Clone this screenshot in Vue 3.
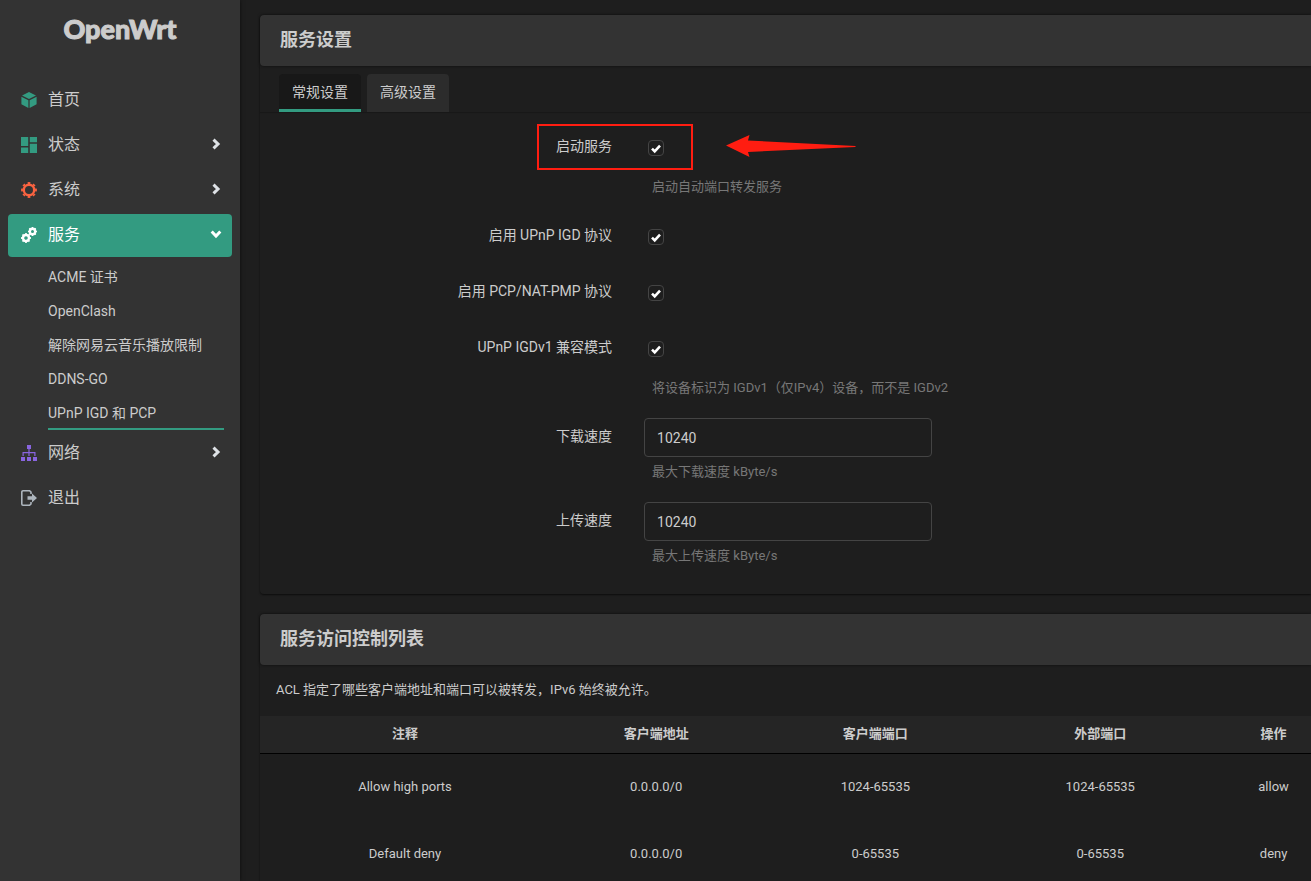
<script setup>
import { reactive } from 'vue'

const menu = [
  { id: 'home', label: '首页' },
  { id: 'status', label: '状态', sub: true },
  { id: 'system', label: '系统', sub: true },
  {
    id: 'services',
    label: '服务',
    sub: true,
    open: true,
    children: ['ACME 证书', 'OpenClash', '解除网易云音乐播放限制', 'DDNS-GO', 'UPnP IGD 和 PCP'],
  },
  { id: 'network', label: '网络', sub: true },
  { id: 'logout', label: '退出' },
]
const current = 'UPnP IGD 和 PCP'

const fields = reactive([
  { id: 'enabled', label: '启动服务', type: 'check', value: true, hint: '启动自动端口转发服务', marked: true },
  { id: 'upnp', label: '启用 UPnP IGD 协议', type: 'check', value: true },
  { id: 'natpmp', label: '启用 PCP/NAT-PMP 协议', type: 'check', value: true },
  { id: 'igdv1', label: 'UPnP IGDv1 兼容模式', type: 'check', value: true, hint: '将设备标识为 IGDv1（仅IPv4）设备，而不是 IGDv2' },
  { id: 'download', label: '下载速度', type: 'text', value: '10240', hint: '最大下载速度 kByte/s' },
  { id: 'upload', label: '上传速度', type: 'text', value: '10240', hint: '最大上传速度 kByte/s' },
])

const columns = ['注释', '客户端地址', '客户端端口', '外部端口', '操作']
const rules = [
  ['Allow high ports', '0.0.0.0/0', '1024-65535', '1024-65535', 'allow'],
  ['Default deny', '0.0.0.0/0', '0-65535', '0-65535', 'deny'],
]
</script>

<template>
  <div class="layout">
    <aside class="sidebar">
      <a class="brand" href="#">OpenWrt</a>
      <nav>
        <ul class="menu">
          <li v-for="item in menu" :key="item.id">
            <a class="item" :class="{ active: item.open }" href="#">
              <svg v-if="item.id === 'home'" class="icon green" viewBox="0 0 16 16">
                <path d="M8 0l7 3.400L8 7 1 3.400zM.4 4.700L7.400 8.200V16L.4 12.300zM15.600 4.700L8.600 8.200V16l7-3.700z" />
              </svg>
              <svg v-else-if="item.id === 'status'" class="icon green" viewBox="0 0 16 16">
                <path d="M0 0h7.200v9H0zM0 10.500h7.200V16H0zM8.800 0H16v5.200H8.800zM8.800 6.800H16V16H8.800z" />
              </svg>
              <svg v-else-if="item.id === 'system'" class="icon orange" viewBox="0 0 16 16">
                <circle class="ring" cx="8" cy="8" r="5.200" />
                <circle class="teeth" cx="8" cy="8" r="7" pathLength="80" />
              </svg>
              <svg v-else-if="item.id === 'services'" class="icon white" viewBox="0 0 16 16">
                <circle class="ring" cx="5" cy="11" r="3" />
                <circle class="teeth pair" cx="5" cy="11" r="4.300" pathLength="80" />
                <circle class="ring" cx="11.500" cy="4.500" r="2.700" />
                <circle class="teeth pair" cx="11.500" cy="4.500" r="3.800" pathLength="80" />
              </svg>
              <svg v-else-if="item.id === 'network'" class="icon purple" viewBox="0 0 16 16">
                <path d="M6 0h4v4H6zM0 12h4v4H0zM6 12h4v4H6zM12 12h4v4h-4zM7.400 4h1.200v3h5.900v4h-1.200V8.200H8.600V11H7.400V8.200H2.700V11H1.500V7h5.900z" />
              </svg>
              <svg v-else class="icon grey" viewBox="0 0 16 16">
                <path class="line" d="M10 4V2.200L8.600.8H2A1.200 1.200 0 0 0 .8 2v12A1.200 1.200 0 0 0 2 15.200h6.600L10 13.800V12" />
                <path d="M6.500 6.300H11V3.500L16 8l-5 4.500V9.700H6.500z" />
              </svg>
              <span class="text">{{ item.label }}</span>
              <svg v-if="item.sub" class="chevron" :class="{ down: item.open }" viewBox="0 0 12 12">
                <path d="M3.500 1.700L8 6l-4.500 4.300" />
              </svg>
            </a>
            <ul v-if="item.children" class="submenu">
              <li v-for="child in item.children" :key="child">
                <a class="subitem" :class="{ current: child === current }" href="#">{{ child }}</a>
              </li>
            </ul>
          </li>
        </ul>
      </nav>
    </aside>

    <main class="main">
      <section class="section">
        <h3 class="title">服务设置</h3>
        <div class="tabs">
          <button class="tab selected" type="button">常规设置</button>
          <button class="tab" type="button">高级设置</button>
        </div>
        <form class="form">
          <div v-for="field in fields" :key="field.id" class="row">
            <label class="label" :for="field.id">{{ field.label }}</label>
            <div class="field">
              <div v-if="field.type === 'check'" class="check">
                <input :id="field.id" v-model="field.value" type="checkbox" />
                <svg v-if="field.value" class="tick" viewBox="0 0 16 16">
                  <path d="M4 8.600l2.700 2.700L12 5.600" />
                </svg>
              </div>
              <input v-else :id="field.id" v-model="field.value" class="input" type="text" />
              <p v-if="field.hint" class="hint" :class="{ spaced: field.type === 'check' }">{{ field.hint }}</p>
              <template v-if="field.marked">
                <span class="mark"></span>
                <svg class="arrow" viewBox="0 0 130 22">
                  <path d="M0 10.500L23.500 0 22 5.500 129.500 11v1L22 17l1.500 5z" />
                </svg>
              </template>
            </div>
          </div>
        </form>
      </section>

      <section class="section">
        <h3 class="title">服务访问控制列表</h3>
        <p class="description">ACL 指定了哪些客户端地址和端口可以被转发，IPv6 始终被允许。</p>
        <table class="table">
          <thead>
            <tr>
              <th v-for="column in columns" :key="column">{{ column }}</th>
            </tr>
          </thead>
          <tbody>
            <tr v-for="rule in rules" :key="rule[0]">
              <td v-for="(cell, i) in rule" :key="i">{{ cell }}</td>
            </tr>
          </tbody>
        </table>
      </section>
    </main>
  </div>
</template>

<style>
body {
  background: #1e1e1e;
}
</style>

<style scoped>
.layout {
  display: flex;
  height: 100vh;
  overflow: hidden;
  color: #ccc;
  font: 14px/20px Roboto, "Noto Sans CJK SC", sans-serif;
}
.sidebar {
  box-sizing: border-box;
  flex: none;
  width: 240px;
  padding: 0 8px;
  background: #333;
  box-shadow: 0 0 4px rgba(0, 0, 0, 0.6);
}
.brand {
  display: block;
  padding: 9px 0 30px;
  color: #ccc;
  font: 900 27px/40px Lato, sans-serif;
  text-align: center;
  text-decoration: none;
  -webkit-text-stroke: 1px #ccc;
}
ul {
  margin: 0;
  padding: 0;
  list-style: none;
}
.menu > li {
  margin-bottom: 2px;
}
.item {
  display: flex;
  box-sizing: border-box;
  align-items: center;
  height: 43px;
  padding: 0 10px 2px 13px;
  border-radius: 4px;
  color: #ccc;
  font-size: 16px;
  text-decoration: none;
}
.item.active {
  background: #339b81;
  color: #fff;
}
.text {
  flex: 1;
  margin-left: 11px;
}
.icon {
  width: 16px;
  height: 16px;
  fill: currentColor;
}
.green { color: #339b81; }
.orange { color: #fb6340; }
.white { color: #fff; }
.purple { color: #8965e0; }
.grey { color: #adb5bd; }
.ring,
.teeth,
.line {
  fill: none;
  stroke: currentColor;
}
.ring {
  stroke-width: 2.4px;
}
.teeth {
  stroke-width: 1.8px;
  stroke-dasharray: 5 5;
  stroke-dashoffset: 2.5;
}
.teeth.pair {
  stroke-width: 1.4px;
}
.line {
  stroke-width: 1.6px;
}
.chevron {
  width: 12px;
  height: 12px;
  margin-bottom: 2px;
  fill: none;
  stroke: #dee2e6;
  stroke-width: 3;
}
.chevron.down {
  transform: rotate(90deg);
  stroke: #fff;
}
.submenu {
  padding: 3px 8px 0 40px;
}
.subitem {
  display: block;
  box-sizing: border-box;
  height: 34px;
  border-bottom: 2px solid transparent;
  color: #ccc;
  line-height: 34px;
  text-decoration: none;
}
.subitem.current {
  border-color: #339b81;
}
.main {
  flex: 1;
  min-width: 0;
  padding: 15px 0 0 20px;
}
.section {
  margin-bottom: 20px;
  border-radius: 4px 0 0 4px;
  box-shadow: 0 1px 2px rgba(0, 0, 0, 0.6);
}
.title {
  box-sizing: border-box;
  height: 51px;
  margin: 0;
  padding: 0 20px;
  border-radius: 4px 0 0 4px;
  background: #333;
  box-shadow: 0 0 3px rgba(0, 0, 0, 0.6);
  font-size: 18px;
  font-weight: 700;
  line-height: 50px;
}
.tabs {
  display: flex;
  gap: 6px;
  padding: 8px 19px 0;
  box-shadow: 0 1px 1px rgba(0, 0, 0, 0.2);
}
.tab {
  height: 38px;
  padding: 0 13px;
  border: 0;
  border-bottom: 3px solid transparent;
  border-radius: 4px 4px 0 0;
  background: #2c2c2c;
  color: #ccc;
  font: inherit;
}
.tab.selected {
  border-color: #339b81;
  background: #181818;
}
.form {
  padding: 6px 0 18px;
}
.row {
  display: flex;
  padding: 10px 0 5px;
}
.label {
  width: 33.5%;
  line-height: 36px;
  text-align: right;
}
.field {
  position: relative;
  flex: 1;
  padding-left: 32px;
}
.check {
  display: flex;
  box-sizing: border-box;
  align-items: center;
  height: 41px;
  padding: 0 0 2px 4px;
}
.check input {
  appearance: none;
  width: 16px;
  height: 16px;
  margin: 0;
  border: 1px solid #444;
  border-radius: 4px;
}
.tick {
  width: 16px;
  height: 16px;
  margin-left: -16px;
  fill: none;
  stroke: #fff;
  stroke-width: 2.6px;
  pointer-events: none;
}
.input {
  display: block;
  box-sizing: border-box;
  width: 288px;
  height: 39px;
  padding: 0 12px;
  border: 1px solid #444;
  border-radius: 4px;
  background: transparent;
  color: #ccc;
  font: inherit;
}
.hint {
  margin: 0;
  padding-left: 8px;
  color: #777;
  font-size: 13px;
  line-height: 30px;
}
.hint.spaced {
  padding-top: 3px;
}
.mark {
  position: absolute;
  top: -4px;
  left: -75px;
  box-sizing: border-box;
  width: 156px;
  height: 46px;
  border: 2px solid #ff1d11;
  pointer-events: none;
}
.arrow {
  position: absolute;
  top: 7px;
  left: 114px;
  width: 130px;
  height: 22px;
  fill: #ff1d11;
}
.description {
  margin: 0;
  padding: 15px 16px 16px;
  font-size: 13px;
}
.table {
  width: 100%;
  border-collapse: collapse;
  table-layout: fixed;
  font-size: 13px;
  text-align: center;
}
th {
  height: 35px;
  padding: 0 0 2px;
  border-bottom: 1px solid #000;
  background: #252525;
}
td {
  height: 65px;
  padding: 0 0 2px;
}
th:nth-child(1) { width: 27.6%; }
th:nth-child(2) { width: 20.2%; }
th:nth-child(3) { width: 21.5%; }
th:nth-child(4) { width: 21.3%; }
th:nth-child(5),
td:nth-child(5) { padding-left: 24px; }
</style>
